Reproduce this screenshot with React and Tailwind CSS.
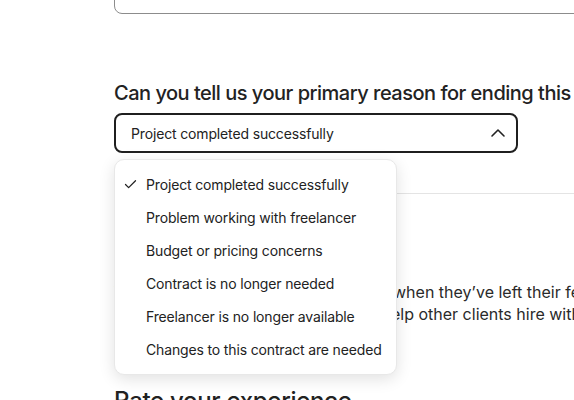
import React, { useState } from 'react';
import { Check, ChevronUp } from 'lucide-react';

const reasons = [
  'Project completed successfully',
  'Problem working with freelancer',
  'Budget or pricing concerns',
  'Contract is no longer needed',
  'Freelancer is no longer available',
  'Changes to this contract are needed'
];

export default function App() {
  const [selected, setSelected] = useState(reasons[0]);
  const [open, setOpen] = useState(true);

  return (
    <div className="w-[574px] h-[400px] overflow-hidden bg-white font-['Inter','Liberation_Sans',sans-serif] text-[#222]">
      <div className="w-[760px] pl-[114px]">
        {/* Previous field (textarea) */}
        <div className="h-[80px] -mt-[66px] rounded-[8px] border border-[#8c8c8c]" />

        {/* Reason question */}
        <h2 className="mt-[65px] text-[20px] leading-[28px] font-medium tracking-[-0.5px] whitespace-nowrap">
          Can you tell us your primary reason for ending this contract?
        </h2>

        <div className="relative mt-[6px] w-[404px]">
          <button
            onClick={() => setOpen(!open)}
            className="flex items-center justify-between w-full h-[40px] rounded-[8px] border-2 border-[#1f1f1f] pl-[15px] pr-[6px] text-[14px] tracking-[-0.15px] text-left"
          >
            <span>{selected}</span>
            <ChevronUp size={24} strokeWidth={1.6} className={open ? '' : 'rotate-180'} />
          </button>

          {open && (
            <div className="absolute left-0 top-[46px] z-10 w-[283px] rounded-[10px] border border-[#e8e8e8] bg-white py-[8px] shadow-[0_4px_16px_rgba(0,0,0,0.12)]">
              {reasons.map((r) => (
                <div
                  key={r}
                  onClick={() => { setSelected(r); setOpen(false); }}
                  className="flex items-center h-[33px] pl-[8px] text-[14px] tracking-[-0.15px] whitespace-nowrap cursor-pointer"
                >
                  <span className="w-[15px] flex justify-center">
                    {selected === r && <Check size={15} strokeWidth={2} />}
                  </span>
                  <span className="ml-[8px]">{r}</span>
                </div>
              ))}
            </div>
          )}
        </div>

        {/* Divider */}
        <div className="mt-[40px] h-px bg-[#e4e4e4]" />

        {/* Feedback section */}
        <h3 className="mt-[32px] text-[20px] leading-[28px] font-medium">Share feedback</h3>
        <p className="mt-[27px] text-[16px] leading-[22px] whitespace-nowrap text-[#2a2a2a]">
          We’ll share your feedback with them when they’ve left their feedback for you.
          <br />
          Your public feedback will then also help other clients hire with confidence.
        </p>

        <h3 className="mt-[60px] text-[24px] leading-[32px] font-medium tracking-[-0.3px]">Rate your experience</h3>
      </div>
    </div>
  );
}
